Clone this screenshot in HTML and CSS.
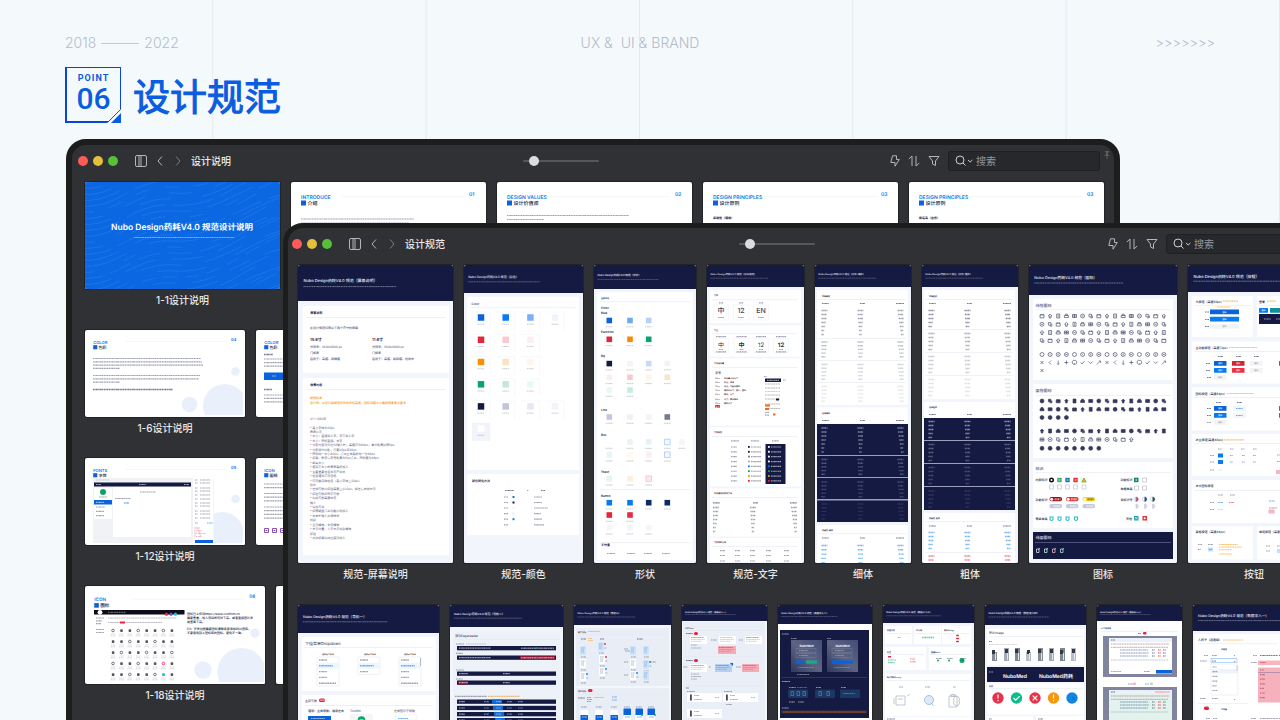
FILE: index.html
```html
<!DOCTYPE html>
<html lang="zh-CN">
<head>
    <meta charset="UTF-8">
    <meta name="viewport" content="width=device-width, initial-scale=1.0">
    <title>设计规范</title>
    <link rel="stylesheet" href="styles.css">
</head>
<body>
    <header class="topline">
        <p class="years">2018 <span class="dash"></span> 2022</p>
        <p class="topic">UX &amp;&nbsp; UI &amp; BRAND</p>
        <p class="arrows">&gt;&gt;&gt;&gt;&gt;&gt;&gt;</p>
    </header>

    <div class="heading">
        <div class="point">
            <span class="point-label">POINT</span>
            <span class="point-no">06</span>
            <svg class="point-corner" width="14" height="14" viewBox="0 0 14 14">
                <path d="M0 14L14 0V14Z" fill="#f4fafb"/>
                <path d="M.5 13.5L13.5 .5" stroke="#0a50dc"/>
                <path d="M4 14L14 4V14Z" fill="#0a5ce0"/>
            </svg>
        </div>
        <h1>设计规范</h1>
    </div>

    <main class="desktop">
        <!-- 设计说明 -->
        <section class="window window-back">
            <div class="toolbar">
                <div class="tools">
                    <span class="dot red"></span><span class="dot yellow"></span><span class="dot green"></span>
                    <button class="icon-btn sidebar" aria-label="边栏"><svg width="12" height="12" viewBox="0 0 12 12"><rect x=".5" y=".5" width="11" height="11" rx="1.5"/><path d="M4 .5V11.5M6 .5V11.5"/></svg></button>
                    <button class="icon-btn back" aria-label="后退"><svg width="6" height="10" viewBox="0 0 6 10"><path d="M5 .5L1 5L5 9.500"/></svg></button>
                    <button class="icon-btn next" aria-label="前进"><svg width="6" height="10" viewBox="0 0 6 10"><path d="M1 .5L5 5L1 9.500"/></svg></button>
                    <h2>设计说明</h2>
                </div>
                <input class="zoom" type="range" min="0" max="100" value="10" aria-label="缩放">
                <div class="tools">
                    <button class="icon-btn action" aria-label="快捷"><svg width="10" height="12" viewBox="0 0 10 12"><path d="M2.500 .8H6.500V4.500H9.300L5 11.200V7.500H.8Z"/></svg></button>
                    <button class="icon-btn action" aria-label="排序"><svg width="12" height="12" viewBox="0 0 12 12"><path d="M.8 4L4 1V11M8 1V11L11.200 8"/></svg></button>
                    <button class="icon-btn action" aria-label="筛选"><svg width="12" height="12" viewBox="0 0 12 12"><path d="M1 1.500H11L7.500 6V10.500L4.500 9V6Z"/></svg></button>
                    <label class="search">
                        <svg width="18" height="12" viewBox="0 0 18 12"><circle cx="5" cy="5" r="4"/><path d="M8 8L10.500 10.500M13 5L15.200 7L17.400 5"/></svg>
                        <input type="text" placeholder="搜索" aria-label="搜索">
                    </label>
                </div>
            </div>
            <svg class="pin" width="6" height="8" viewBox="0 0 6 8"><path d="M1 0H5V1L4 1.500V3.500L6 5H3.500V8H2.500V5H0L2 3.500V1.500L1 1Z" fill="#5d5e62"/></svg>

            <div class="row">
                <figure><svg class="board" id="cover" width="195" height="107" viewBox="85 182 195 107"></svg><figcaption>1-1设计说明</figcaption></figure>
                <figure><svg class="board" id="introduce" width="195" height="107" viewBox="291 182 195 107"></svg></figure>
                <figure><svg class="board" id="values" width="195" height="107" viewBox="497 182 195 107"></svg></figure>
                <figure><svg class="board" id="principles1" width="195" height="107" viewBox="703 182 195 107"></svg></figure>
                <figure><svg class="board" id="principles2" width="195" height="107" viewBox="909 182 195 107"></svg></figure>
            </div>
            <div class="row">
                <figure><svg class="board" id="color1" width="160" height="87" viewBox="85 330 160 87"></svg><figcaption>1-6设计说明</figcaption></figure>
                <figure><svg class="board" id="color2" width="160" height="87" viewBox="256 330 160 87"></svg></figure>
            </div>
            <div class="row">
                <figure><svg class="board" id="fonts" width="160" height="87" viewBox="85 458 160 87"></svg><figcaption>1-12设计说明</figcaption></figure>
                <figure><svg class="board" id="icon1" width="160" height="87" viewBox="256 458 160 87"></svg></figure>
            </div>
            <div class="row">
                <figure><svg class="board" id="icon2" width="180" height="98" viewBox="85 587 180 98"></svg><figcaption>1-18设计说明</figcaption></figure>
                <figure><svg class="board" id="blank" width="180" height="98" viewBox="276 587 180 98"></svg></figure>
            </div>
        </section>

        <!-- 设计规范 -->
        <section class="window window-front">
            <div class="toolbar">
                <div class="tools">
                    <span class="dot red"></span><span class="dot yellow"></span><span class="dot green"></span>
                    <button class="icon-btn sidebar" aria-label="边栏"><svg width="12" height="12" viewBox="0 0 12 12"><rect x=".5" y=".5" width="11" height="11" rx="1.5"/><path d="M4 .5V11.5M6 .5V11.5"/></svg></button>
                    <button class="icon-btn back" aria-label="后退"><svg width="6" height="10" viewBox="0 0 6 10"><path d="M5 .5L1 5L5 9.500"/></svg></button>
                    <button class="icon-btn next" aria-label="前进"><svg width="6" height="10" viewBox="0 0 6 10"><path d="M1 .5L5 5L1 9.500"/></svg></button>
                    <h2>设计规范</h2>
                </div>
                <input class="zoom" type="range" min="0" max="100" value="10" aria-label="缩放">
                <div class="tools">
                    <button class="icon-btn action" aria-label="快捷"><svg width="10" height="12" viewBox="0 0 10 12"><path d="M2.500 .8H6.500V4.500H9.300L5 11.200V7.500H.8Z"/></svg></button>
                    <button class="icon-btn action" aria-label="排序"><svg width="12" height="12" viewBox="0 0 12 12"><path d="M.8 4L4 1V11M8 1V11L11.200 8"/></svg></button>
                    <button class="icon-btn action" aria-label="筛选"><svg width="12" height="12" viewBox="0 0 12 12"><path d="M1 1.500H11L7.500 6V10.500L4.500 9V6Z"/></svg></button>
                    <label class="search">
                        <svg width="18" height="12" viewBox="0 0 18 12"><circle cx="5" cy="5" r="4"/><path d="M8 8L10.500 10.500M13 5L15.200 7L17.400 5"/></svg>
                        <input type="text" placeholder="搜索" aria-label="搜索">
                    </label>
                </div>
            </div>

            <div class="row">
                <figure><svg class="board" id="screen" width="155" height="298" viewBox="298 265 155 298"></svg><figcaption>规范-屏幕说明</figcaption></figure>
                <figure><svg class="board" id="palette" width="119" height="298" viewBox="464 265 119 298"></svg><figcaption>规范-颜色</figcaption></figure>
                <figure><svg class="board" id="shape" width="102" height="298" viewBox="594 265 102 298"></svg><figcaption>形状</figcaption></figure>
                <figure><svg class="board" id="type" width="97" height="298" viewBox="707 265 97 298"></svg><figcaption>规范-文字</figcaption></figure>
                <figure><svg class="board" id="thin" width="96" height="298" viewBox="815 265 96 298"></svg><figcaption>细体</figcaption></figure>
                <figure><svg class="board" id="bold" width="96" height="298" viewBox="922 265 96 298"></svg><figcaption>粗体</figcaption></figure>
                <figure><svg class="board" id="icons" width="148" height="298" viewBox="1029 265 148 298"></svg><figcaption>图标</figcaption></figure>
                <figure><svg class="board" id="buttons" width="132" height="298" viewBox="1188 265 132 298"></svg><figcaption>按钮</figcaption></figure>
            </div>
            <div class="row">
                <figure><svg class="board" id="nav1" width="141" height="160" viewBox="298 605 141 160"></svg></figure>
                <figure><svg class="board" id="nav2" width="113" height="160" viewBox="450 605 113 160"></svg></figure>
                <figure><svg class="board" id="nav3" width="97" height="160" viewBox="574 605 97 160"></svg></figure>
                <figure><svg class="board" id="card" width="85" height="160" viewBox="683 605 85 160"></svg></figure>
                <figure><svg class="board" id="login" width="94" height="160" viewBox="778 605 94 160"></svg></figure>
                <figure><svg class="board" id="empty" width="91" height="160" viewBox="883 605 91 160"></svg></figure>
                <figure><svg class="board" id="image" width="101" height="160" viewBox="985 605 101 160"></svg></figure>
                <figure><svg class="board" id="dialog" width="85" height="160" viewBox="1097 605 85 160"></svg></figure>
                <figure><svg class="board" id="input" width="130" height="160" viewBox="1193 605 130 160"></svg></figure>
            </div>
        </section>
    </main>

    <script src="boards.js"></script>
</body>
</html>
```
FILE: styles.css
```css
* {
    box-sizing: border-box;
}

body {
    margin: 0;
    height: 100vh;
    overflow: hidden;
    display: flex;
    flex-direction: column;
    font-family: Inter, "Noto Sans CJK SC", sans-serif;
    background-color: #f4fafb;
    background-image: linear-gradient(to left, #e5eaf1 1px, transparent 1px);
    background-size: calc(100% / 6) 100%;
}

h1, h2, p, figure {
    margin: 0;
}

.topline {
    display: grid;
    grid-template-columns: 1fr auto 1fr;
    align-items: center;
    padding: 33px 65px 0;
    font-family: Inter, sans-serif;
    font-size: 14px;
    font-weight: 300;
    line-height: 20px;
    color: #b4bbcb;
}

.years {
    display: flex;
    align-items: center;
    gap: 5px;
}

.dash {
    width: 38px;
    height: 1px;
    background: #c3c9d6;
}

.arrows {
    text-align: right;
    font-size: 13px;
}

/* 标题 */
.heading {
    display: flex;
    align-items: center;
    gap: 12px;
    padding: 14px 65px 0;
}

.heading h1 {
    font-family: "Noto Sans CJK SC", sans-serif;
    font-size: 37px;
    line-height: 56px;
    font-weight: 400;
    -webkit-text-stroke: 1px #0a5ce0;
    color: #0a5ce0;
}

.point {
    position: relative;
    width: 56px;
    height: 56px;
    display: flex;
    flex-direction: column;
    align-items: center;
    padding-top: 5px;
    border: 1px solid #0a45d8;
    border-left-width: 2px;
    border-bottom-width: 2px;
    font-family: Roboto, sans-serif;
    color: #0a5ce0;
}

.point-label {
    font-size: 9px;
    line-height: 10px;
    font-weight: 700;
    letter-spacing: 1px;
}

.point-no {
    font-size: 30px;
    line-height: 32px;
    font-weight: 500;
}

.point-corner {
    position: absolute;
    right: -1px;
    bottom: -2px;
}

/* 窗口 */
.desktop {
    position: relative;
    flex: 1;
    margin-top: 16px;
    min-height: 0;
}

.window {
    position: absolute;
    bottom: -80px;
    overflow: hidden;
    background: #303134;
    border: 6px solid #1c1d1d;
    border-radius: 20px;
}

.window-back {
    top: 0;
    left: 66px;
    width: calc(100% - 226px);
}

.window-front {
    top: 84px;
    left: 283px;
    width: calc(100% - 223px);
    border-width: 5px;
}

.toolbar {
    display: flex;
    justify-content: space-between;
    align-items: center;
    height: 32px;
    padding: 0 14px 0 6px;
}

.window-front .toolbar {
    padding: 0 17px 0 4px;
}

.tools {
    display: flex;
    align-items: center;
}

.tools h2 {
    font-size: 10px;
    line-height: 20px;
    font-weight: 500;
    color: #e9e9ea;
}

.dot {
    width: 10px;
    height: 10px;
    margin-right: 5px;
    border-radius: 50%;
}

.red {
    background: #fc5b57;
}

.yellow {
    background: #e5bf3c;
}

.green {
    background: #57c038;
}

.icon-btn {
    display: flex;
    padding: 0;
    border: none;
    background: none;
    cursor: pointer;
}

.icon-btn svg, .search svg {
    fill: none;
    stroke: #b4b5b8;
}

.sidebar {
    margin: 0 10px 0 12px;
}

.next {
    margin: 0 10px 0 12px;
    opacity: 0.6;
}

.action {
    margin-right: 8px;
}

.zoom {
    appearance: none;
    width: 76px;
    height: 2px;
    margin: 0;
    border-radius: 1px;
    background: #56575b;
}

.zoom::-webkit-slider-thumb {
    appearance: none;
    width: 10px;
    height: 10px;
    border-radius: 50%;
    background: #dcdce0;
}

.search {
    display: flex;
    align-items: center;
    gap: 3px;
    width: 152px;
    height: 20px;
    padding: 0 6px;
    border: 1px solid #1f2022;
    border-radius: 3px;
    background: #27282b;
}

.search svg {
    flex: none;
    stroke: #d0d0d2;
}

.search input {
    width: 100%;
    padding: 0;
    border: none;
    outline: none;
    background: none;
    font-family: inherit;
    font-size: 10px;
    line-height: 16px;
    color: #e0e0e0;
}

.search input::placeholder {
    color: #98999c;
}

.pin {
    position: absolute;
    top: 6px;
    right: 4px;
}

/* 画板 */
.row {
    display: flex;
    gap: 11px;
    padding: 5px 0 0 13px;
    margin-bottom: 14px;
}

.window-front .row {
    padding-left: 10px;
    margin-bottom: 15px;
}

.row figure {
    flex: none;
}

.board {
    display: block;
    border-radius: 2px;
    background: #fff;
    box-shadow: 0 0 0 1px #222326;
    text-rendering: geometricPrecision;
}

figcaption {
    font-size: 10px;
    line-height: 22px;
    text-align: center;
    font-weight: 500;
    color: #e9e9ea;
}
```
FILE: boards.js
```js
const NAVY = '#151a43';
const BLUE = '#0a62dd';
const SKY = '#087bf0';
const RED = '#e3263a';
const ORANGE = '#f9930c';
const GREEN = '#0ba36c';
const PALE = '#f2f6fc';
const INK = '#5b5e7c';

// 基础图形
function rect(x, y, w, h, fill, r = 0) {
    return `<rect x="${x}" y="${y}" width="${w}" height="${h}" rx="${r}" fill="${fill}"/>`;
}

function text(x, y, size, str, fill = NAVY, weight = 500, anchor = 'start') {
    return `<text x="${x}" y="${y}" font-size="${size}" font-weight="${weight}" text-anchor="${anchor}" fill="${fill}">${str}</text>`;
}

function circle(x, y, r, fill) {
    return `<circle cx="${x}" cy="${y}" r="${r}" fill="${fill}"/>`;
}

function path(d, stroke, width = 0.6, fill = 'none') {
    return `<path d="${d}" stroke="${stroke}" stroke-width="${width}" fill="${fill}"/>`;
}

// 缩略文字行
function copy(x, y, w, color = INK, h = 1.2) {
    return `<path d="M${x} ${y}h${w}" stroke="${color}" stroke-width="${h}" stroke-dasharray="1.4 .4 .9 .3 1.8 .5" opacity=".58"/>`;
}

function copies(x, y, step, widths, color, h) {
    return widths.map((w, i) => copy(x, y + i * step, w, color, h)).join('');
}

function rule(x, y, w) {
    return rect(x, y, w, 0.6, '#e3e8f0');
}

function fill(id, parts) {
    document.getElementById(id).innerHTML = parts.join('');
}

// 说明页页眉
function doc(x, y, w, en, cn, no) {
    const s = w / 195;
    return rect(x + 50 * s, y + 14 * s, w - 72 * s, 0.4, '#e6e9ee')
        + text(x + 10 * s, y + 16.5 * s, 5 * s, en, SKY, 600)
        + text(x + w - 17 * s, y + 13.5 * s, 5 * s, no, SKY, 600)
        + rect(x + 10 * s, y + 18.5 * s, 5 * s, 5 * s, BLUE)
        + text(x + 16.5 * s, y + 23 * s, 5 * s, cn, NAVY);
}

// 规范页页眉
function head(x, y, w, h, name) {
    const size = w / 39;
    return rect(x, y, w, h, NAVY)
        + text(x + w * 0.035, y + h * 0.47, size, `Nubo Design药耗V4.0 规范（${name}）`, '#e4e6f2')
        + copy(x + w * 0.035, y + h * 0.6, w * 0.6, '#b8bbd0', w / 160);
}

function panel(x, y, w, h, title) {
    return rect(x, y, w, h, '#fff')
        + text(x + w * 0.05, y + 7.5, 3, title, NAVY, 600)
        + rule(x + 3, y + 11, w - 6);
}

function swatch(x, y, color, size = 6) {
    return rect(x - size / 2, y - size / 2, size, size, color)
        + copy(x - 3.5, y + size / 2 + 3.5, 7, '#9698ac', 0.9);
}

/* ---------- 设计说明 ---------- */
let waves = '';
for (let i = 0; i < 34; i++) {
    const y = 160 + i * 6;
    const dash = `${14 + i % 5 * 9} ${8 + i % 4 * 8}`;
    waves += `<path d="M80 ${y + 22}C118 ${y + 26} 132 ${y - 6} 174 ${y - 3}S238 ${y - 26} 284 ${y - 38 - i % 3 * 4}" stroke="#78b4ff" stroke-width=".5" stroke-dasharray="${dash}" opacity=".35" fill="none"/>`;
}
fill('cover', [
    rect(85, 182, 195, 107, '#0b68e2'),
    waves,
    text(182, 229.5, 195 / 23, 'Nubo Design药耗V4.0 规范设计说明', '#fff', 600, 'middle'),
    copy(134, 237.5, 100, '#d5e6ff', 1)
]);
fill('introduce', [
    doc(291, 182, 195, 'INTRODUCE', '介绍', '01'),
    copies(301, 219, 4, [113, 108, 110])
]);
fill('values', [
    doc(497, 182, 195, 'DESIGN VALUES', '设计价值观', '02'),
    copies(507, 215.5, 4, [122, 37])
]);
fill('principles1', [
    doc(703, 182, 195, 'DESIGN PRINCIPLES', '设计原则', '03'),
    text(713, 219, 3, '易用性（通用）', NAVY, 700),
    copies(713, 223.5, 4, [136])
]);
fill('principles2', [
    doc(909, 182, 195, 'DESIGN PRINCIPLES', '设计原则', '03'),
    text(919, 219, 3, '稳定高（业务）', NAVY, 700),
    copies(919, 223.5, 4, [130])
]);
fill('color1', [
    circle(225, 406, 22, '#e9f0fc'), rect(243, 380, 2, 36, '#fff'), rect(200, 415, 45, 2, '#fff'),
    circle(189.5, 404.5, 7.8, '#e9f0fc'), circle(235.5, 371.5, 4.3, '#e9f0fc'),
    doc(85, 330, 160, 'COLOR', '色彩', '04'),
    copies(93, 358.5, 3.3, [108, 109, 110, 27]),
    copies(93, 375.5, 3.3, [107, 106, 27]),
    copy(93, 389.5, 80, NAVY, 1.4)
]);
fill('color2', [
    doc(256, 330, 160, 'COLOR', '色彩', '04'),
    copies(264, 354.5, 3.6, [9], NAVY, 1.5), copies(264, 359, 3.6, [40, 40, 40]),
    rect(264, 372.5, 30, 7.5, BLUE), copy(272, 376, 4, '#fff'),
    copy(264, 389.5, 8, NAVY, 1.5), copies(264, 395, 3.4, [40, 40, 40])
]);
fill('fonts', [
    circle(222, 534, 22, '#e9f0fc'), rect(243, 510, 2, 36, '#fff'), rect(200, 543, 45, 2, '#fff'), circle(235.5, 499, 4.3, '#e9f0fc'),
    doc(85, 458, 160, 'FONTS', '字体', '05'),
    rect(93, 478, 100, 65, '#f1f2f6'), copy(96, 480, 14, '#a0a2b0', 0.8),
    rect(94, 482.5, 97, 4, NAVY), copy(96, 484.5, 5, '#fff'), copy(139, 484.5, 7, '#fff'), copy(184, 484.5, 5, '#fff'),
    rect(113, 487, 78, 50, '#fff'), rect(94, 488, 18, 31, '#fff'),
    circle(103, 492, 3, GREEN), copy(99, 497, 8), rect(94, 500, 18, 4.5, BLUE), copy(96, 502.3, 8, '#fff'),
    copies(96, 507, 4.3, [9, 8, 8]), copies(115, 498.500, 4, [16]), copy(124, 503, 5, SKY, 1.6), copy(140, 492, 16),
    rect(193, 477, 21, 66, '#fff'), rect(213, 478, 0.4, 64, '#e4e6ee'),
    ...[480, 483, 488, 491, 495, 499, 503, 506, 511, 514, 518].map(y => copy(195, y, 2.5) + copy(200, y, 10, INK, 0.9)),
    copy(195, 523, 3), copy(207, 523, 6, SKY, 1),
    copies(196, 528, 2.8, [4, 6, 10, 5], '#ee5b6c', 0.8), path('M195 527V538M197 527l4 10', '#ee8a98', 0.5),
    rect(195, 540, 18, 3, BLUE)
]);
fill('icon1', [
    doc(256, 458, 160, 'ICON', '图标', '05'),
    copies(264, 484, 3.7, [40, 40]), copies(264, 493.5, 3.7, [40, 40, 40]), copies(264, 507, 3.7, [40, 40, 40, 40]),
    ...[266.5, 274.5, 282.5].map(x => path(`M${x - 2} 528.500h4v4h-4zM${x - 1} 530.500h2`, '#7e3fa8', 0.9))
]);

// 图标库截图
let lib = '';
for (let r = 0; r < 5; r++) {
    for (let c = 0; c < 8; c++) {
        const x = 113 + c * 8.4;
        const y = 631.5 + r * 11;
        const hot = r === 3 && c === 6 ? '#e51e5a' : r === 4 && c === 6 ? '#08bcd5' : '#555761';
        lib += (r + c) % 3 ? rect(x - 1.2, y - 1.2, 2.6, 2.6, hot, 0.6) : `<circle cx="${x}" cy="${y}" r="1.3" fill="none" stroke="${hot}" stroke-width=".8"/>`;
        lib += copy(x - 2, y + 3.5, 4, '#85879a', 0.6) + copy(x - 2.5, y + 5.3, 5, '#85879a', 0.6);
    }
}
fill('icon2', [
    circle(241.5, 673, 24, '#e9f0fc'), rect(264, 640, 2, 50, '#fff'), rect(215, 683, 50, 2, '#fff'),
    circle(203, 671, 8.7, '#e9f0fc'), circle(255, 634, 4.7, '#e9f0fc'),
    doc(85, 587, 180, 'ICON', '图标', '06'),
    rect(94, 611, 90.5, 4.5, '#0c0d18'), circle(100, 613.3, 2.4, '#fff'), copies(108, 613.3, 3, [18], '#fff', 0.8),
    circle(166.5, 615.2, 1.6, '#f0222c'), circle(171, 615.2, 1.6, '#7444d5'), circle(175.5, 615.2, 1.6, '#12c3c7'),
    copies(96, 619, 2.8, [8, 6, 5]), copies(96, 630.5, 3, [8, 8]), copies(108, 619, 4.5, [68, 54], '#777988', 0.9), rect(120, 622.5, 5, 2, '#ef2433'),
    lib,
    text(187, 616, 3, '图标已上传到https://www.iconfont.cn', NAVY),
    text(187, 620, 3, '需要查看，加入项目即可对下载，或者直接图片发', NAVY),
    text(187, 624, 3, '这里面下载。', NAVY),
    text(187, 631, 3, 'PS：开发过程需要图标请联系我添加到UI图库，', NAVY),
    text(187, 635, 3, '不要使用别人图标库的图标，避免不一致。', NAVY)
]);

/* ---------- 设计规范 第一行 ---------- */
fill('screen', [
    rect(298, 265, 155, 298, PALE), head(298, 265, 155, 36, '屏幕说明'),
    panel(303, 306, 146, 67, '屏幕说明'),
    text(310, 328.5, 3, '此设计规范仅限以下两个尺寸的屏幕', INK),
    text(310, 340.500, 4, '15.6寸', NAVY, 600), text(372, 340.500, 4, '11.6寸', NAVY, 600),
    text(310, 347.5, 3, '分辨率：1920x1080 px', INK), text(372, 347.5, 3, '分辨率：1920x1080 px', INK),
    text(310, 353.5, 3, '门板屏', INK), text(372, 353.5, 3, '门板屏', INK),
    text(310, 360, 3, '应用于：高柜、麻精柜', INK), text(372, 360, 3, '应用于：高柜、副麻柜、抢救车', INK),
    panel(303, 378, 146, 177, '像素内容'),
    text(310, 399, 3, '视觉标准', ORANGE),
    text(310, 403.5, 3, '设计师：以设计稿规范优先的所有高度、图标间距大小需按照像素点要求', ORANGE),
    text(310, 419.500, 3, 'V1.1-1280年', INK, 400),
    ...['* 最小字体为20px', '界面展示', '* 大小：直接加入字、字不加入字', '* 大小：图标直接、文字', '* 列表内容部位在50输入框，高度应为60px，单位距离间隔5px', '* 列表操作间距，行宽20px到30px', '* 图标统一大小40px，点击区域最好统一为48px', '* 按键、数字与符号距离为5px点击，图标宽为48px', '* 如果大小', '* 使用不大小的界面最好加入', '* 主要重要信息中可产出文', '* 信息通知不可忽略', '* 应可能用微信息（最小字体至20px）', '抬头', '* 左侧导航及按钮高度至少12px，如左与右侧显示', '* 按钮导航和图示导航', '* 保持导航高度固定', '输入', '* 保持导出', '* 按照键盘点击功能展现加入', '* 文本框输入页填样式', '视频', '* 全部播放、文字播放', '* 显示位置、人员显示视频播放', '按钮', '* 对次按键保持在底部加入'].map((s, i) => text(310, 428.5 + i * 4.42, 3, s, INK, 400))
]);

const paletteRows = [
    [317.5, [BLUE, '#0878fa', '#7bb0f8', '#f0f4fa']],
    [339.800, [RED, '#fbc8d0', '#fdeeef']],
    [362, ['#fb9004', '#fde2c2', '#fef6ea']],
    [384.300, [GREEN, '#c1ead9', '#e8f9f3']],
    [406.400, [NAVY, '#c1c5dc', '#e6e9f2', '#f3f4fa']],
    [428.500, ['#ffffff']]
];
fill('palette', [
    rect(464, 265, 119, 298, PALE), head(464, 265, 119, 28, '颜色'),
    rect(467, 297, 112, 173, '#fff'), text(471.5, 304.5, 3, 'Color', NAVY), rule(470, 307.5, 106),
    rect(472, 423, 18, 18, '#f2f4f9'),
    ...paletteRows.map(([y, list]) => list.map((c, i) => {
        const x = 481 + i * 24.7;
        return path(`M${x - 9} ${y - 5.500}h18v18`, '#eef0f5', 0.5) + swatch(x, y, c, 6.5);
    }).join('')),
    rect(467, 474, 112, 61, '#fff'), text(472, 481.5, 3, '颜色转化方法', NAVY, 600),
    copies(505, 490.5, 5, [9], NAVY), copy(527, 490.500, 1.5), copy(541, 490.5, 4, NAVY),
    ...[497, 502.500, 508, 513.700, 519.200, 524.800].map((y, i) => copy(504, y, 4) + rect(512.5, y - 1, 2, 2, [SKY, NAVY, '#f3f4fa', '#d9efea', SKY, '#fff'][i]) + copy(534, y, [8, 8, 14, 7, 8, 10][i]))
]);

const shapeRows = [
    [320.5, [BLUE, '#71aaf3', '#b5d3fa']],
    [339.300, [RED, '#f88a08', GREEN]],
    [363.600, [NAVY, '#f3f4f6', '#c4dcfa', '#f0f5fc']],
    [377.300, ['#f9efec', '#fac9cf', '#fff4e6', '#fde2c8']],
    [390, ['#e8f9f4', '#c6ecdf']],
    [417, ['#c1c8dc', '#edf0f5', '#f3f4f9', '#747b94']],
    [442, ['#fff', '#eaf2f5', '#e5f2f6', '#f2f8fe', '#f6f6f6']],
    [454.700, ['#e5f5f5', '#fff8ed', '#fbeeee', '#f2f8fe']],
    [478.700, ['#e3f6ef', '#fdf0d9', '#fde9ea']],
    [502.700, ['#0879ee', '#087af5', '#0b2867', '#0c2867']],
    [515, [RED, '#ed2940']],
    [527.700, ['#f5f6f8', '#f3f4f7', '#f4f5f7']]
];
const shapeCols = [609.300, 630, 648.700, 667.300, 682];
fill('shape', [
    rect(594, 265, 102, 298, PALE), head(594, 265, 102, 24, '形状'),
    rect(597, 292, 96, 268, '#fff'), text(601, 299, 2, '全部应用', NAVY, 700), rule(600, 301.5, 90),
    ...[['Color', 308.500], ['Blue', 314], ['Function', 333], ['Bg', 357], ['Line', 411], ['Box', 435.500], ['Toast', 472.500], ['Button', 496.500], ['工作量', 545.500]].map(([s, y]) => text(601, y, 3, s, NAVY, 600)),
    ...shapeRows.map(([y, list]) => list.map((c, i) => swatch(shapeCols[i], y, c, 5.6)).join('')),
    path('M664.500 439.200h5.600v5.600h-5.600zM664.500 451.900h5.600v5.600h-5.600z', '#8abcf2', 0.6),
    path('M645.900 475.900h5.600v5.600h-5.600z', '#f3a2aa', 0.5),
    rule(599, 489.5, 92), rule(599, 542.5, 92), ...[607, 627, 644, 662].map(x => copy(x, 553.500, 8))
]);

// 字号列表
function sizes(x, y, n, step, color, gap = 39) {
    let out = '';
    for (let i = 0; i < n; i++) {
        const w = 6 - i * 0.6;
        out += copy(x, y + i * step, w, color, 1.4) + copy(x + gap - w / 2, y + i * step, w, color, 1.4) + copy(x + gap * 2 + 4 - w, y + i * step, w, color, 1.4);
    }
    return out;
}

fill('type', [
    rect(707, 265, 97, 298, PALE), head(707, 265, 97, 22, '字体规范'),
    rect(710, 290, 91, 33, '#fff'), text(714, 296, 2, '字体', NAVY, 700), rule(712, 299.500, 86),
    ...[['中', 721], ['12', 741], ['EN', 761]].map(([s, x]) => path(`M${x - 7.500} 305h15v15h-15z`, '#eff1f5', 0.6) + text(x, 312.500, 7, s, '#3e4160', 500, 'middle') + copy(x - 2, 302.800, 4) + copy(x - 3, 317.500, 6)),
    rect(710, 325.5, 91, 31, '#fff'), text(714, 330.5, 2, '字重', NAVY, 700), rule(712, 333.500, 86),
    ...[['中', 721, 400], ['中', 741.500, 700], ['12', 761, 400], ['12', 781, 700]].map(([s, x, b]) => path(`M${x - 7.500} 338.500h15v14h-15z`, '#eff1f5', 0.6) + text(x, 346.500, 6, s, '#2e3155', b, 'middle') + copy(x - 5, 336.700, 10) + copy(x - 2, 349.500, 4) + copy(x - 5, 351.800, 10)),
    rect(710, 358.5, 91, 67, '#fff'), text(714, 364, 2, '字号及行高', NAVY, 700), rule(712, 367, 86),
    text(715, 373.500, 3, '字号', NAVY, 500),
    ...['56px', '40px', '36px', '32px', '28px', '24px', '20px'].map((s, i) => text(715, 378.5 + i * 4.2, 2, s, INK) + text(724, 378.5 + i * 4.2, 2, ['显示最大的文字', '标题、弹窗', '标题、功能的按钮', '辅助的文字、输入、按钮', '表单、文字', '文字、表单描述', '辅助文字'][i], NAVY)),
    rect(715, 405, 5, 3, RED, 1), text(715.500, 407.500, 2, '备注', '#fff'),
    rect(765, 378.500, 16, 3.500, NAVY), copy(767, 380.300, 12, '#fff'), copy(783, 380, 3), copy(764, 376.500, 3),
    ...[384, 388, 391.500, 395, 399, 404, 408.500].map((y, i) => copy(765, y, 15, i === 2 ? ORANGE : '#777', 0.9)),
    rect(776, 398.500, 3, 2, NAVY), rect(765, 404.500, 5, 2, '#f56a18'), rect(765, 408, 4, 2, '#f56a18'), rect(773, 413.500, 2.500, 2, '#f56a18'), copies(765, 412.500, 2.600, [4, 4]),
    rect(710, 427.5, 91, 59, '#fff'), text(714, 433, 2, '字体颜色', NAVY, 700), rule(712, 436, 86),
    copy(731, 440.800, 8), copy(751, 440.800, 8), copy(772, 440.800, 7), rect(765.5, 444, 20, 40, NAVY),
    ...[NAVY, NAVY, '#777', '#aaa', SKY, GREEN, ORANGE, RED].map((c, i) => copy(731, 447 + i * 4.85, 6) + rect(748, 446 + i * 4.85, 1.8, 1.8, c) + copy(751, 447 + i * 4.85, 10) + rect(768, 446 + i * 4.85, 1.8, 1.8, i < 4 ? '#fff' : c) + copy(771, 447 + i * 4.85, 10, '#fff')),
    rect(710, 488.5, 91, 48, '#fff'), text(714, 494, 2, '中文通用中间文字号', NAVY, 700), rule(712, 497.500, 86),
    copies(713, 502.800, 4, [7], NAVY), copy(753, 502.800, 5, NAVY), copy(790, 502.800, 7, NAVY), sizes(713, 507.500, 7, 4, INK, 40),
    rect(710, 538, 91, 24, '#fff'), text(714, 543, 2, '字体间距方法', NAVY, 700), rule(712, 546, 86),
    ...[550.700, 555.500, 561].map(y => [720, 735, 750, 766, 784].map(x => copy(x, y, 5)).join(''))
]);

fill('thin', [
    rect(815, 265, 96, 298, PALE), head(815, 265, 96, 22, '字体-细体'),
    rect(817, 290, 91, 115, '#fff'), text(822, 296.5, 2, '常规细体', NAVY, 700), rule(818, 299, 88),
    copy(822, 303.5, 7, NAVY), copy(860, 303.5, 5, NAVY), copy(896, 303.5, 8, NAVY),
    sizes(821.500, 310.500, 7, 4, '#555873'), sizes(821.500, 342, 5, 3.7, '#85879c'), sizes(821.500, 364.500, 5, 3.7, '#a8aab8'), sizes(821.500, 386.500, 5, 3.7, '#ced0da'),
    rule(818, 338, 88), rule(818, 360, 88), rule(818, 382, 88),
    rect(817, 407.5, 91, 16, '#fff'), text(822, 414, 2, '反白细体', NAVY, 700), copy(822, 420.500, 7, NAVY), copy(860, 420.500, 5, NAVY), copy(896, 420.500, 8, NAVY),
    rect(817, 424, 91, 98, '#9ca0b8'), rect(817, 424, 91, 31, NAVY), rect(817, 456, 91, 21, NAVY), rect(817, 478, 91, 21, NAVY), rect(817, 500.500, 91, 21.5, NAVY),
    sizes(821.500, 428, 7, 4, '#d5d7e5'), sizes(821.500, 459.500, 5, 3.7, '#8d90ab'), sizes(821.500, 482, 5, 3.7, '#6d708f'), sizes(821.500, 504, 5, 3.7, '#45486c'),
    rect(817, 525, 91, 38, '#fff'), text(822, 531, 2, '功能色-细体', NAVY, 700), rule(818, 533.5, 88),
    copy(822, 538, 7, NAVY), copy(860, 538, 5, NAVY), copy(896, 538, 8, NAVY), sizes(821.500, 545.500, 5, 4.3, SKY)
]);
fill('bold', [
    rect(922, 265, 96, 298, PALE), head(922, 265, 96, 22, '字体-粗体'),
    rect(924, 290, 91, 109, '#fff'), text(929, 296.5, 2, '常规粗体', NAVY, 700), rule(925, 299, 88),
    copy(929, 303.5, 7, NAVY), copy(967, 303.5, 5, NAVY), copy(1003, 303.5, 8, NAVY),
    sizes(928.500, 310.500, 5, 4, '#353858'), sizes(928.500, 333.500, 5, 4, '#696c84'), sizes(928.500, 356.500, 5, 4, '#999bac'), sizes(928.500, 379.500, 5, 4, '#c4c6d2'),
    rule(925, 329, 88), rule(925, 352, 88), rule(925, 375, 88),
    rect(924, 402, 91, 16, '#fff'), text(929, 408, 2, '反白粗体', NAVY, 700), copy(929, 414.500, 7, NAVY), copy(967, 414.500, 5, NAVY), copy(1003, 414.500, 8, NAVY),
    rect(924, 418, 91, 92, '#9ca0b8'), ...[418, 441, 464, 487].map(y => rect(924, y, 91, y === 487 ? 23 : 22, NAVY)),
    sizes(928.500, 421.500, 5, 4, '#edf0fb'), sizes(928.500, 444.500, 5, 4, '#9b9eb7'), sizes(928.500, 467.500, 5, 4, '#73769a'), sizes(928.500, 491, 5, 4, '#4d5076'),
    rect(924, 513, 91, 50, '#fff'), text(929, 519, 2, '功能色-粗体', NAVY, 700), rule(925, 521.5, 88),
    copy(929, 526, 7, NAVY), copy(967, 526, 5, NAVY), copy(1003, 526, 8, NAVY), sizes(928.500, 532.500, 5, 4, SKY), rule(925, 552, 88), sizes(928.500, 556, 2, 4, RED)
]);

// 图标阵列
const outline = ['M.5 0h3v4h-3zM1.500 1.500h1M1.500 2.800h1', 'M0 .8h4v3h-4zM1 0v1.500M3 0v1.500', 'M2 0a2 2 0 100 4a2 2 0 100-4M1 2h2', 'M0 1.500h4v2h-4zM1 1.500v-1.300h2v1.300', 'M2 0l1.800 2h-1v2h-1.600v-2h-1z', 'M.3 .3h2.500v2.500h-2.500zM3.800 1.500v2.300h-2.300', 'M0 .5h4v3h-4zM0 2h4M2 .5v3'];
const rounds = ['M2 0a2 2 0 100 4a2 2 0 100-4M1 2h2', 'M2 0a2 2 0 100 4a2 2 0 100-4M2 1v2', 'M2 0a2 2 0 100 4a2 2 0 100-4M1.300 1.300l1.400 1.400', 'M2 0a2 2 0 100 4a2 2 0 100-4'];
const marks = ['M0 4l3-3M2 .5h1.800v1.800', 'M2 0v4M1 3l1 1l1-1', 'M0 2l1.500 1.500l2.500-3', 'M.5 .5l3 3M3.500 .5l-3 3', 'M2 0v4M0 2h4', 'M0 1l2 2l2-2', 'M3 0l-2 2l2 2', 'M2 0a1.500 2 0 100 3.500a1.500 2 0 100-3.500M2 3v1'];
function glyphs(y, n, set, solid) {
    let out = '';
    for (let i = 0; i < n; i++) {
        const d = set[(i * 3 + Math.round(y)) % set.length];
        out += `<path transform="translate(${(1040 + i * 8.12).toFixed(1)} ${y - 2})" d="${d}" stroke="#34385c" stroke-width=".6" fill="${solid ? '#34385c' : 'none'}"/>`;
    }
    return out;
}

fill('icons', [
    rect(1029, 265, 148, 298, PALE), head(1029, 265, 148, 30, '图标'),
    rect(1033, 299, 140, 81, '#fff'), text(1035.5, 306.5, 4, '线性图标', INK), rule(1035, 309.500, 136),
    ...[316, 324.300, 332.500, 340.600].map(y => glyphs(y, 16, outline)), glyphs(354.500, 16, rounds), glyphs(362.500, 16, marks), glyphs(370.500, 1, marks),
    rect(1033, 384, 140, 74, '#fff'), text(1035.5, 391.5, 4, '面性图标', INK), rule(1035, 395, 136),
    glyphs(401, 16, outline, true), glyphs(409.300, 16, outline, true), glyphs(417.500, 4, rounds, true),
    glyphs(431, 16, outline, true), glyphs(439.500, 12, outline), glyphs(448.300, 8, rounds, true),
    rect(1033, 462, 140, 66, '#fff'), text(1035.5, 469.500, 4, '标识', INK), rule(1035, 472, 136),
    text(1035.500, 481, 3, '内部标识', NAVY), text(1120.500, 481, 3, '功能标识', NAVY), text(1120.500, 489.500, 3, '单据单品', NAVY),
    circle(1051.500, 480, 2.500, '#111'), circle(1051.500, 480, 1, '#fff'), ...[['#40a875', 1059.500], ['#1678b8', 1067.500], ['#ed2e2f', 1075.500]].map(([c, x]) => rect(x - 2.200, 477.800, 4.400, 4.400, c) + path(`M${x - 1} 480h2`, '#fff', 0.7)), path('M1084 478l2.200 4h-4.400z', '#8b9f22', 0.8, '#bdca34'),
    ...[1051.500, 1059.500, 1067.500, 1075.500, 1084].map(x => path(`M${x - 2} 485h4v4h-4z`, '#bec2d4', 0.7)),
    rect(1134, 477.700, 4.500, 4.500, '#15865d'), circle(1136.200, 480, 0.8, '#fff'), ...[[1142.500, 478], [1134.500, 486], [1142.500, 486]].map(([x, y]) => path(`M${x} ${y}h4v4h-4z`, '#b8bcc8', 0.7)),
    text(1035.500, 500.500, 3, '功能标识', NAVY), text(1120.500, 500.500, 3, '双标识号', NAVY),
    ...[['#9d1017', 1049.500], ['#ed3130', 1066], ['#f7d319', 1082.500]].map(([c, x]) => rect(x, 497, 12.500, 4.300, c, 2) + circle(x + 2.200, 499.200, 1.500, '#fff') + copy(x + 5, 499.200, 6, c === '#f7d319' ? '#444' : '#fff', 2) + rect(x, 504, 12.500, 4.300, '#c3c8da', 2) + copy(x + 4, 506.200, 7, '#fff', 2)),
    ...[['#c74064', 1136], ['#244d87', 1144.500], ['#1e594b', 1152.500]].map(([c, x]) => path(`M${x} 497a2.200 2.200 0 010 4.400z`, c, 0.6, c) + path(`M${x} 497a2.200 2.200 0 000 4.400z`, '#bec2d4', 0.6) + path(`M${x} 504a2.200 2.200 0 010 4.400z`, '#c5c8d2', 0.6, '#d5d7df')),
    text(1035.500, 519.500, 3, '等级单品', NAVY), text(1126, 519.500, 3, '其他', NAVY),
    ...[1051.500, 1059.500, 1067.500, 1076].map(x => path(`M${x - 1.500} 517h3v2.500q-1.500 2-3 0z`, '#2abfcb', 1.1)), rect(1134, 516, 4.500, 4.500, '#1ca5af'), path('M1135 517l2.500 2.500M1137.500 517l-2.500 2.500', '#fff', 0.6), rect(1142.500, 516, 4.500, 4.500, '#eb3138'), circle(1144.700, 518.200, 1, '#fff'),
    rect(1033, 532, 140, 27, NAVY), text(1035.5, 539, 4, '线面图标', '#d6d9e8'), rect(1035, 542, 136, 0.6, '#777b9e'),
    ...[1038, 1046, 1054, 1062].map((x, i) => path(`M${x - 1.500} 549h2.500v3.500h-2.500zM${x} 550l2-2`, ['#d9dceb', '#c4ebdc', '#e5b1bb', '#abdccd'][i], 0.8))
]);

function btn(x, y, color, w = 12.500, label = '按钮') {
    return rect(x, y, w, 4.800, color, 0.5) + (label ? text(x + w / 2, y + 3.300, 2, label, color === '#f1f3f6' ? '#999' : '#fff', 500, 'middle') : '');
}
fill('buttons', [
    rect(1188, 265, 132, 298, PALE), head(1188, 265, 155, 27, '按钮'),
    rect(1192, 296, 61, 41, '#fff'), text(1195.500, 302.5, 3, '大按钮（高度90px）', NAVY), copy(1223, 301.200, 15, ORANGE), rule(1194, 305, 57),
    copy(1217, 307, 14, ORANGE), btn(1210, 309.500, BLUE, 29), btn(1210, 316.800, SKY, 29), btn(1210, 324, '#f1f3f6', 29), ...[312, 319.500, 326.500].map(y => copy(1205, y, 4, NAVY)),
    rect(1257, 296, 60, 41, '#fff'), text(1259, 302.5, 3, '登录', NAVY), copy(1267, 301.200, 9, ORANGE), rule(1259, 305, 50), btn(1259, 308, SKY, 9), btn(1270, 308, '#138e9b', 13, ''), rect(1259, 314, 60, 10, NAVY), copy(1264, 319, 7, '#fff'), copy(1276, 319, 7, '#fff'),
    rect(1192, 341.500, 127, 42, '#fff'), text(1195.500, 348.5, 3, '主功能按钮（高度72px）', NAVY), copy(1229, 347.500, 28, ORANGE), rule(1194, 351, 124),
    copy(1218, 356.500, 5, NAVY), copy(1236, 356.500, 5, NAVY), copy(1254, 356.500, 5, NAVY),
    ...[361, 368].map((y, i) => copy(1206, y + 2.500, 4, NAVY) + btn(1214, y, i ? SKY : BLUE) + btn(1232, y, i ? '#f02f43' : '#cf2434') + btn(1250, y, '#f1f3f6') + (i ? '' : btn(1279, y, SKY, 12, ''))), copy(1207, 377.500, 4, NAVY), btn(1214, 375, '#f1f3f6'),
    rect(1192, 387.500, 127, 43, '#fff'), text(1195.500, 395, 3, '图标按钮（高度64px）', NAVY), copy(1227, 393.500, 27, ORANGE), rule(1194, 397, 124), copy(1216, 402.500, 5, NAVY), copy(1237, 402.500, 5, NAVY),
    ...[406, 413].map((y, i) => copy(1207, y + 2.500, 4, NAVY) + btn(1214, y, i ? SKY : BLUE) + rect(1233, y, 13, 5, '#f3f5f8') + copy(1236, y + 2.500, 7, SKY) + btn(1279, y, SKY, 12, '')), copy(1207, 422.500, 4), btn(1214, 420, '#f1f3f6'),
    rect(1192, 434, 127, 42, '#fff'), text(1195.500, 441, 3, '次主按钮(高度40px)', NAVY), copy(1224, 439.800, 20, ORANGE), rule(1194, 443, 124),
    ...[1218, 1230, 1241, 1253].map(x => copy(x, 449, 3.500)), ...[454, 460.500].map(y => copy(1210, y + 1.500, 4) + rect(1218, y - 0.500, 5, 4, SKY) + copy(1230, y + 1.500, 3, SKY) + copy(1242, y + 1.500, 3) + copy(1253, y + 1.500, 3, RED) + copy(1277, y + 1, 3)), copy(1210, 470, 4), copy(1219, 470, 3, '#bbb'), rect(1276, 470, 5, 4, '#f7b6bf'),
    rect(1192, 480, 127, 43, '#fff'), text(1195.500, 487, 3, '次文图标按钮', NAVY), rule(1194, 490, 124), copy(1218, 495, 5), copy(1230, 495, 5), copies(1210, 502.500, 7, [4, 4]), copy(1218, 502.500, 5, SKY), copy(1229, 502.500, 5, RED), copy(1218, 509.500, 5, '#bbb'), copy(1269, 501, 6, SKY), copy(1269, 508, 8), rect(1268.500, 509.500, 6, 4, '#f7b6bf'),
    rect(1192, 526.500, 61, 33, '#fff'), text(1195.500, 533, 3, '表格按钮（高度44px）', NAVY), copies(1198, 544.500, 5, [4, 3]), copy(1208, 544.500, 5), rect(1208, 547.500, 5, 4, '#bee0ff'), copy(1209, 549.500, 3, SKY), copies(1219, 544.500, 2.600, [19, 23, 13], ORANGE, 1), copy(1219, 554, 13, ORANGE, 1),
    rect(1257, 526.500, 60, 33, '#fff'), text(1259, 533, 3, '单选按钮（高度44px）', NAVY), copies(1266, 546, 5, [4, 4]), copy(1277, 546, 4), rect(1277, 549, 6, 4, '#bee0ff')
]);

/* ---------- 设计规范 第二行 ---------- */
function menu(x, y, n) {
    let out = rect(x, y, 22, n * 5.8, '#fff', 1) + `<rect x="${x}" y="${y}" width="22" height="${n * 5.8}" rx="1" fill="none" stroke="#e2e5ed" stroke-width=".6"/>`;
    for (let i = 0; i < n; i++) {
        if (i === 1) out += rect(x, y + 5.8, 22, 5.8, '#eef5ff');
        out += copy(x + 2, y + 3 + i * 5.8, i === 4 ? 17 : i === 1 ? 14 : 8, i === 1 ? SKY : INK, 1.4);
    }
    return out;
}
fill('nav1', [
    rect(298, 605, 141, 160, PALE), head(298, 605, 141, 28, '导航一'),
    rect(302, 637, 134, 54, '#fff'), text(305, 644.5, 4, '下拉菜单Dropdown', NAVY, 400), rule(305, 647, 128),
    text(328, 654.500, 2, '选择向下菜单', NAVY, 500, 'middle'), text(370, 654.500, 2, '选择向下菜单', NAVY, 500, 'middle'), text(410, 654.500, 2, '选择向下菜单', NAVY, 500, 'middle'),
    menu(317, 657, 5), menu(358, 657, 3), menu(399, 657, 5), rect(420, 658, 0.8, 8, '#aaaebb'),
    rect(302, 695, 134, 68, '#fff'), text(305, 702, 3, '主按导航', NAVY, 400), rect(319, 698.500, 6, 3.500, RED, 1.500), text(320, 701.300, 2, 'NEW', '#fff'), rule(305, 705, 128),
    text(308, 711.5, 3, '通用：主体导航、适用左右', NAVY), text(350, 711.500, 3, 'ToolBtn', INK), text(394, 711.500, 3, '左侧图示子导航', INK),
    rect(308, 716, 23, 5, BLUE), copy(311, 718.500, 14, '#fff'), rect(350, 714, 23, 7, '#f3f5f9'), circle(361.500, 720, 3.800, GREEN), path('M359.500 720h4', '#fff', 1), path('M395 715h22v5h-22z', '#e5e9f1', 0.5), copy(398, 718.500, 10, SKY)
]);
fill('nav2', [
    rect(450, 605, 113, 160, PALE), head(450, 605, 113, 22, '导航二'),
    rect(453, 631, 107, 140, '#edf1f8'), text(455, 636.5, 3, '顶部Pageheader', NAVY, 400), rule(455, 639, 105),
    copy(456, 644, 8, INK), copy(466, 644, 20, '#a9abba'), copy(456, 653.300, 7), copy(456, 670, 8), copy(456, 679, 7),
    ...[[646, false], [655.500, true], [671.500, false], [680.500, false]].map(([y, hot], i) => rect(457, y, 99, 4.300, NAVY) + (hot ? rect(520, y + 0.500, 35, 3.300, '#8b1437') : '') + (i === 3 ? rect(458, y + 0.300, 10, 3.800, '#7c1538') : '') + copy(459, y + 2.200, i < 2 ? 32 : 9, '#fff', 1.2) + (i < 2 ? copy(521, y + 2.200, 33, '#e5e7f0', 1.4) + circle(537, y + 2.200, 1, GREEN) : copy(503, y + 2.200, 7, '#fff', 1.2))),
    copy(455, 696.300, 32, INK), copy(488, 696.300, 32, ORANGE),
    ...[699.500, 705.800, 712, 718].map((y, i) => rect(457, y, 99, 4.300, NAVY) + rect(492 + i, y, 10, 4.300, '#126bd5') + copy(459, y + 2.200, 6, '#fff', 1.2) + [484, 496, 507, 518].map(x => copy(x, y + 2.200, 5, '#a8cfff', 1.2)).join('') + rect(486 + i, y, 0.500, 4.300, '#17447e'))
]);
function tile(x, y, mark, selected) {
    return rect(x - 3, y - 4, 6, 9, selected ? '#cfe4fa' : '#fff', 1) + copies(x - 1.800, y - 2, 2, [3.500, 3, 3], selected ? '#4d80b9' : INK, 0.9) + copy(x - 2, y + 7, 5) + (mark ? circle(x + 4, y - 2, 0.9, mark) + copy(x + 3.500, y + 2, 2, SKY, 1) : '');
}
fill('nav3', [
    rect(574, 605, 97, 160, '#f3f6fb'), head(574, 605, 97, 20, '导航三'),
    rect(576, 628, 93, 58, '#e9eef6'), text(578, 632.5, 2, '数字导航', NAVY), copy(588, 631.500, 12, ORANGE), rule(578, 634.5, 90),
    copy(581, 639, 5, NAVY), copies(588, 638.500, 2, [4, 5], ORANGE, 0.9), copy(600, 639, 4, NAVY), copy(637, 639, 6, NAVY),
    tile(583, 650, '', true), tile(601, 646, RED, true), tile(583, 663), tile(602, 659, RED), tile(583, 676, SKY), tile(602, 671, SKY), tile(633, 650, '', true), tile(646, 650, '', true), tile(633, 663), tile(646, 664, GREEN, true), tile(633, 675, SKY), tile(646, 675, '', true),
    copies(624, 649, 13, [4, 4, 4]), copy(625, 651, 5), copy(650, 662, 6),
    rect(576, 688, 93, 80, '#e9eef6'), text(578, 691.500, 2, '楼层导航', NAVY), rect(588, 689, 4.500, 3, RED, 1.500), rule(578, 694.500, 90), copy(578, 698, 7, NAVY), copies(587, 697.500, 2, [4, 5, 4]), copy(594, 697.500, 10, ORANGE), copies(612, 697, 3, [5, 5], SKY),
    ...[584, 599, 614, 627, 639, 651].map((x, i) => copy(x - 3, 707, 6, INK, 1) + rect(x - 3.500, i < 3 ? 710 : 708.500, 7.500, 7, i < 3 ? '#fff' : BLUE, 0.500) + rect(x - 3.500, 715, 7.500, 6, i < 3 ? BLUE : '#fff', 0.500) + copy(x - 2, 717, 5, i < 3 ? '#fff' : SKY)), circle(642, 715, 0.9, GREEN), circle(655, 715, 0.9, GREEN)
]);

function mini(x, y, bg, top = SKY, w = 17) {
    return rect(x, y, w, 8, bg, 0.5) + copy(x + 1, y + 1.500, w - 4, top, 1.2) + copies(x + 1, y + 3.500, 1.800, [w - 3, w - 6], bg === '#fff' ? '#8c8fa4' : '#c6576b', 0.7);
}
fill('card', [
    rect(683, 605, 85, 160, '#f5f7fb'), head(683, 605, 85, 16, '数据录入一'),
    rect(684, 622, 82, 110, '#eaeff7'), text(686, 628.5, 2, '卡片Card', NAVY), rule(686, 630, 78),
    copy(687, 633.500, 7, NAVY), rect(695, 632, 4, 3, RED, 1.5), mini(691, 636, '#fff'), mini(720, 636, '#fff', ORANGE), mini(746, 636, '#fff'), mini(719, 646, '#f5aab5', RED, 18),
    copies(692, 645, 3, [6, 10], INK, 0.8), copy(712, 640, 6), copy(740, 640, 4), rule(686, 656, 78),
    copy(687, 660.500, 7, NAVY), rect(695, 659, 4, 3, RED, 1.5), mini(691, 664, '#fff'), mini(716, 664, '#b4d1f4'), mini(743, 664, '#f5aab5', RED, 17), copy(684.500, 667, 4), copy(710, 667, 2), copy(737, 667, 5), path('M731 663h3v3z', BLUE, 0.1, BLUE), copies(692, 674, 2.500, [8, 10, 6], INK, 0.8),
    rule(686, 685, 78), copy(687, 688, 3, NAVY), copy(688, 691.500, 8), copy(725, 691.500, 8),
    ...[[688, 693], [724, 693], [688, 709]].map(([x, y]) => rect(x, y, 35, 9, '#fff', 0.5) + rect(x + 3, y + 1.500, 1.800, 6, '#43465e') + copies(x + 7, y + 2.500, 4, [5, 8], INK, 0.9) + copy(x + 28, y + 4.500, 4, SKY, 0.8)), copy(727, 704.500, 6)
]);
function loginBox(x) {
    return `<rect x="${x}" y="640" width="31" height="32" fill="url(#glass)"/>`
        + text(x + 15.500, 646.500, 3, 'NuboMed', '#fff', 600, 'middle')
        + path(`M${x + 5} 648.500h20v4h-20zM${x + 5} 653.500h20v4h-20z`, '#8b91b1', 0.3) + copies(x + 8, 650.500, 5, [9, 9], '#bec4d7', 0.8)
        + rect(x + 5, 660.500, 8, 3.200, BLUE) + copies(x + 7, 667.500, 3, [16], '#bec4d7', 0.7);
}
fill('login', [
    '<defs><linearGradient id="glass" x1="0" y1="1" x2="1" y2="0"><stop offset="0" stop-color="#30385d"/><stop offset=".5" stop-color="#5c6482"/><stop offset="1" stop-color="#424d78"/></linearGradient></defs>',
    head(778, 605, 94, 19, '数据录入二'), rect(780, 630, 89, 88, NAVY), copy(782, 634, 7, '#fff'), copy(791, 638.500, 6, '#ccd'), copy(827, 638.500, 4, '#ccd'),
    loginBox(791), loginBox(827), rect(806, 660.500, 11, 3.200, '#1aab8a'), rect(832, 660.500, 21, 3.200, BLUE), copy(797, 674.500, 12, '#c7ccdb'), rect(782, 677, 85, 0.4, '#5d6184'), copy(782, 681.500, 8, '#fff'),
    copy(789, 687.500, 7, '#fff', 0.9), copy(797, 687.500, 10, '#c7ccdb', 0.7), copy(816, 687.500, 5, '#fff', 0.9), copy(841, 687.500, 5, '#fff', 0.9),
    rect(788, 689.500, 20, 8.500, '#193863', 1), rect(815, 689.500, 20, 8.500, '#193863', 1), rect(840, 689.500, 20, 8.500, '#193863', 1),
    ...[791, 797, 803, 819, 827].map(x => path(`M${x} 691.500h2.500v4h-2.500z`, '#6c8bb5', 0.6)), copy(843, 693.500, 12, '#7798c5'), copy(789, 702, 6, '#fff'), copy(798, 702, 6, '#fff'), copy(782, 708, 7, '#fff'),
    rect(781, 710.500, 86, 2.800, '#3e2c38'), copy(783, 712, 83, ORANGE, 1)
]);
fill('empty', [
    rect(883, 605, 91, 160, PALE), head(883, 605, 91, 18, '数据录入三'),
    ...[[885, 27, '折叠面板'], [914, 27, '时间轴'], [942, 29, '徽标Badge']].map(([x, w, s]) => rect(x, 626, w, 18, '#fff') + text(x + 2, 631, 2, s, NAVY) + rule(x + 1, 633, w - 2)),
    copy(898, 637.500, 2.500, SKY), copy(922, 637.500, 12, GREEN, 1.4), ...[635.500, 638.500, 641.500].map(y => rect(956, y - 0.700, 3, 1.500, RED, 0.700)),
    rect(885, 647, 41, 23, '#fff'), rect(929, 647, 42, 23, '#fff'), text(887, 652.500, 2, '标签', NAVY), text(931, 652.500, 2, '按键Radio', NAVY), rule(886, 654, 38), rule(930, 654, 40),
    rect(888, 656, 3, 1.500, RED), copies(888, 660, 2.600, [8, 7], GREEN, 1.2), copies(910, 659, 2.800, [5, 6], RED, 1), ...[938, 949, 962].map((x, i) => copy(x - 2, 658.500, 6) + circle(x, 660.500, i === 2 ? 2.500 : 1, GREEN)),
    rect(885, 674, 86, 42, '#fff'), text(887, 678, 2, '缺省插图Empty', NAVY), rule(886, 680, 84), copy(899, 687, 4), copy(925, 687, 5), copy(953, 687, 2.500),
    path('M896 696h9v9h-9zM898 699h5M894 698v6M907 696l3-2', '#a8afbd', 0.7), circle(929, 700, 4.500, '#dce9f8'), path('M929 695.500a4.500 4.500 0 100 9a4.500 4.500 0 100-9M931.500 703l2 3', '#8eaccc', 0.7), path('M949 696h8v11h-8zM951 694.500h4v2h-4zM954 701a3 3 0 105 0a3 3 0 10-5 0', '#a8afbd', 0.7),
    rect(885, 717, 86, 8, '#fff'), copy(887, 719, 8, NAVY)
]);
fill('image', [
    rect(985, 605, 101, 160, PALE), head(985, 605, 101, 20, '数据录入四'),
    rect(987, 629, 97, 36, '#fff'), text(989, 633.5, 3, '图片Image', NAVY, 400), rule(989, 636, 94), copy(989, 641.500, 3, NAVY), copies(989, 644.500, 3, [28], '#b2b4c2', 0.9),
    ...[992, 1004, 1015, 1026, 1038, 1049, 1060, 1071].map((x, i) => rect(x, i === 0 || i === 3 ? 652 : 648, 5, i === 0 || i === 3 ? 9 : 13, ['#868b96', '#a4aab5', '#7d8693', '#b9bdc7'][i % 4]) + rect(x + (i % 2 ? 1 : 0), i % 3 ? 649 : 650, 3, 4, '#313744') + rect(x + 3, 653, 1, 7, '#e0e4eb')),
    rect(987, 667, 97, 15, NAVY), copy(989, 672, 4, '#fff', 1), text(1003, 678, 5, 'NuboMed', '#f2f3f9', 700), text(1039, 678, 5, 'NuboMed药耗', '#f2f3f9', 700),
    rect(987, 683.500, 97, 31, '#fff'), text(989, 687, 2, '状态', NAVY), rule(989, 688.500, 94),
    circle(998, 698, 5.700, '#e7324a'), path('M998 694.500v4M998 700v1.200', '#fff', 1.2), circle(1016.500, 698, 5.700, '#11b98b'), path('M1013.500 698l2.200 2.200l4-4', '#fff', 1.2), circle(1035, 698, 5.700, '#e7324a'), path('M1032.700 695.700l4.600 4.600M1037.300 695.700l-4.600 4.600', '#fff', 1.2), circle(1053.500, 698, 5.700, '#fa960c'), path('M1053.500 694.500v4M1053.500 700v1.200', '#fff', 1.2), circle(1072, 698, 5.700, '#1086e4'), path('M1072 699h3M1072 697l3 2', '#126bb5', 0.8),
    rect(987, 716, 46, 8, '#fff'), rect(1036, 716, 48, 8, '#fff'), copy(989, 719, 3, NAVY), copy(1038, 719, 5, NAVY)
]);
function sheet(x, y, bg) {
    return rect(x, y, 63, 36, bg) + rect(x, y, 63, 4, '#eaf1f8') + copy(x + 2, y + 2, 4, NAVY)
        + copies(x + 2, y + 6, 3.300, [58, 57], '#a3697f', 1) + copies(x + 11, y + 12, 3, [28, 29, 28], '#335b9d', 1.2) + [43, 49, 54].map((d, i) => copies(x + d, y + 12, 3, [3, 3, 3], i === 1 ? RED : INK, 1.3)).join('') + copies(x + 2, y + 22, 3, [57], '#8b8ea4', 0.8);
}
fill('dialog', [
    head(1097, 605, 85, 16, '数据录入五'), rect(1099, 625, 81, 140, '#fff'), text(1101, 628.800, 2, '左下角弹窗', NAVY), rule(1101, 631, 77), copy(1138, 633.500, 3, NAVY), rect(1143, 632, 3.500, 2.500, RED, 1),
    rect(1103, 636, 74, 41, '#80859d'), sheet(1109, 638, '#fff'), copy(1111, 671.500, 10, GREEN, 1), rect(1156, 670, 16, 3.500, BLUE), copy(1144, 671.500, 6),
    copy(1128, 684, 5), rect(1133, 682.500, 3, 2.500, '#f8b5bd', 1), copy(1145, 684, 4), rect(1150, 682.500, 3, 2.500, '#a5dfc5', 1),
    rect(1103, 687, 74, 40, '#80859d'), sheet(1109, 690, '#e2f2ed'), rect(1155, 691, 15, 2, '#f7c2c9')
]);
fill('input', [
    rect(1193, 605, 130, 160, PALE), head(1193, 605, 141, 26, '数据录入—'), rect(1195, 634, 130, 130, '#fff'), text(1198, 641, 3, '入药卡（选宽版）', NAVY), copy(1223, 640, 20, ORANGE), rule(1198, 643.500, 80),
    text(1221, 649.500, 2, '不规范', NAVY, 700), copy(1204, 655.500, 4), copy(1212, 655.500, 5), text(1234, 656, 2, '▾', NAVY), copy(1253, 655.500, 4), copy(1260, 655.500, 20, NAVY), rule(1210, 658, 26),
    path('M1211 658.500h26v4h-26z', '#88b9ed', 0.6), copy(1200, 661, 7), copy(1212, 661, 4, NAVY), text(1234, 662, 2, '▾', NAVY), path('M1211 664h27v31h-27z', '#dce0e8', 0.5), rect(1211, 669, 27, 4.500, '#edf4fe'), copies(1212.500, 667, 4.700, [4, 5, 5, 5, 4, 5], INK),
    rect(1236.500, 665, 1, 6, '#c5c8d1'), rect(1258, 660.500, 30, 4.500, '#f7b5bf'), copy(1251, 662.500, 6), copy(1260, 662.500, 6, RED), rect(1258, 667.500, 30, 35, '#f6b2bc'), copies(1260, 670, 4.600, [4, 5, 5, 5, 4, 5, 5], '#a83651'), rect(1258, 672, 30, 0.6, '#8c7b9b'),
    copy(1200, 698.500, 6), copy(1212, 698.500, 6), text(1234, 699.500, 2, '▾', NAVY), rule(1198, 703, 50), rect(1204, 706.500, 5, 3.500, RED, 1.500), text(1221, 710, 2, '主功能', NAVY, 700), copy(1206, 718.500, 4), copy(1213, 718.500, 4), copy(1251, 718.500, 5), copy(1260, 718.500, 20)
]);
```
